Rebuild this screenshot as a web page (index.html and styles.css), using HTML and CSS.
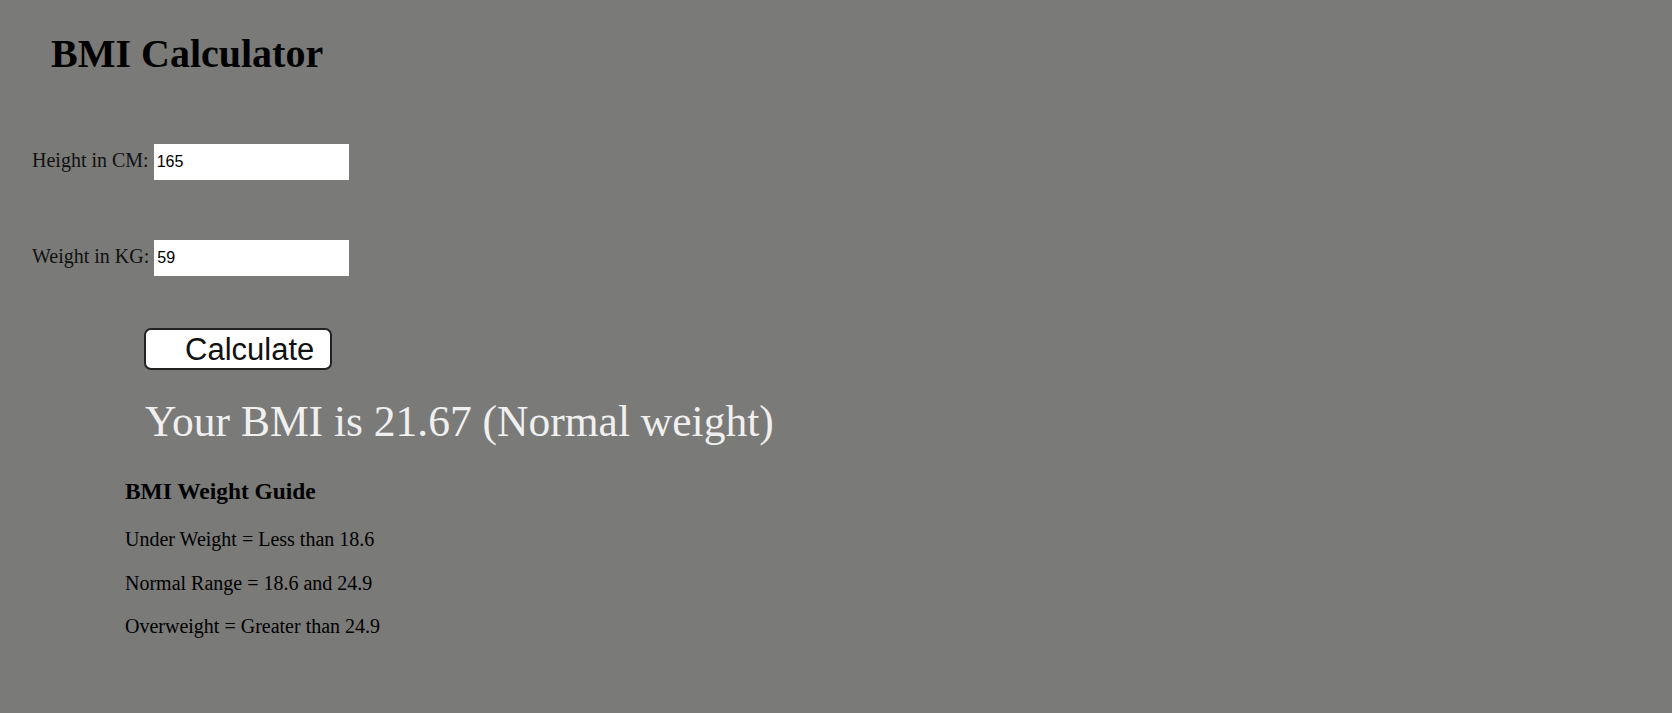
FILE: index.html
```html
<!DOCTYPE html>
<html lang="en">
<head>
<meta charset="utf-8">
<title>BMI Calculator</title>
<link rel="stylesheet" href="styles.css">
</head>
<body>
<main class="page">
  <h1 class="title">BMI Calculator</h1>
  <form class="form">
    <div class="row">
      <label class="label" for="height">Height in CM:</label>
      <input class="field" id="height" type="text" value="165">
    </div>
    <div class="row">
      <label class="label" for="weight">Weight in KG:</label>
      <input class="field" id="weight" type="text" value="59">
    </div>
    <button class="btn" type="button">Calculate</button>
  </form>
  <p class="result">Your BMI is 21.67 (Normal weight)</p>
  <section class="guide">
    <h3 class="guide-title">BMI Weight Guide</h3>
    <p class="guide-line">Under Weight = Less than 18.6</p>
    <p class="guide-line">Normal Range = 18.6 and 24.9</p>
    <p class="guide-line">Overweight = Greater than 24.9</p>
  </section>
</main>
</body>
</html>
```
FILE: styles.css
```css
html, body {
  margin: 0;
  padding: 0;
}

body {
  background: #7a7a78;
  font-family: "Liberation Serif", "Times New Roman", serif;
  font-size: 20px;
  color: #000;
  min-height: 713px;
}

.page {
  display: flex;
  flex-direction: column;
  align-items: flex-start;
  padding-top: 30px;
}

.title {
  margin: 0 0 0 51px;
  font-size: 40px;
  font-weight: bold;
  line-height: normal;
  color: #000;
}

.form {
  display: flex;
  flex-direction: column;
  align-items: flex-start;
  margin: 67px 0 0 32px;
}

.row {
  display: flex;
  align-items: baseline;
  gap: 5px;
  margin-bottom: 60px;
  color: #111;
}

.row:last-of-type {
  margin-bottom: 52px;
}

.label {
  font-size: 20px;
}

.field {
  box-sizing: border-box;
  width: 195px;
  height: 36px;
  border: none;
  outline: none;
  padding: 0 3px;
  margin: 0;
  background: #fff;
  font-family: "Liberation Sans", Arial, sans-serif;
  font-size: 16px;
  color: #000;
}

.btn {
  margin-left: 112px;
  box-sizing: border-box;
  width: 188px;
  height: 42px;
  padding: 0 16px 0 39px;
  border: 2px solid #222;
  border-radius: 7px;
  background: #fff;
  font-family: "Liberation Sans", Arial, sans-serif;
  font-size: 31px;
  line-height: 1;
  color: #111;
  text-align: left;
  white-space: nowrap;
}

.result {
  margin: 26px 0 0 145px;
  font-size: 43.5px;
  line-height: normal;
  color: #f0f0f0;
}

.guide {
  margin: 32px 0 0 125px;
}

.guide-title {
  margin: 0 0 23.4px 0;
  font-size: 23.4px;
  font-weight: bold;
  line-height: normal;
}

.guide-line {
  margin: 0 0 20.2px 0;
  font-size: 20px;
  line-height: normal;
}
```
